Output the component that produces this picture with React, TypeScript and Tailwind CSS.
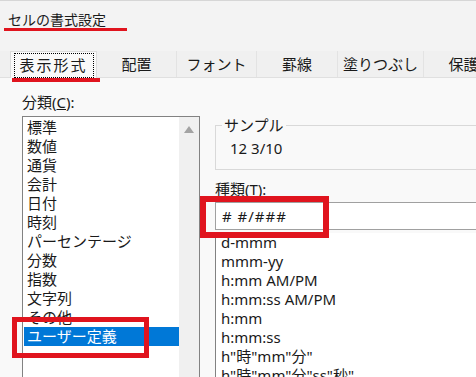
import React from 'react';

const categories = [
  '標準', '数値', '通貨', '会計', '日付', '時刻', 'パーセンテージ',
  '分数', '指数', '文字列', 'その他', 'ユーザー定義',
];

const formats = [
  'd-mmm', 'mmm-yy', 'h:mm AM/PM', 'h:mm:ss AM/PM', 'h:mm', 'h:mm:ss',
  'h"時"mm"分"', 'h"時"mm"分"ss"秒"',
];

const tabs = [
  { label: '表示形式', w: 'w-[87px]' },
  { label: '配置', w: 'w-[80px]' },
  { label: 'フォント', w: 'w-[80px]' },
  { label: '罫線', w: 'w-[81px]' },
  { label: '塗りつぶし', w: 'w-[86px]' },
  { label: '保護', w: 'w-[80px]' },
];

export default function App() {
  return (
    <div
      className="relative w-[476px] h-[377px] overflow-hidden bg-[#f9f9f9] text-[#1a1a1a] text-[15px]"
      style={{ fontFamily: '"Noto Sans", "Noto Sans CJK JP", sans-serif' }}
    >
      {/* title */}
      <div className="h-[51px] bg-[#f3f3f3] border-t border-[#d6d6d6] pl-[8px] pt-[9px] leading-[20px] text-[14px]">
        セルの書式設定
      </div>

      {/* tabs */}
      <div className="flex h-[27px] bg-[#f0f0f0] border-b border-[#e0e0e0] pl-[10px]">
        {tabs.map((t, i) => (
          <div
            key={t.label}
            className={`${t.w} shrink-0 flex items-center justify-center leading-none whitespace-nowrap ${
              i === 0 ? 'bg-[#f9f9f9] border-x border-t border-[#dcdcdc] -mb-px' : 'border-r border-[#e3e3e3]'
            }`}
          >
            {i === 0 ? (
              <span className="border border-dotted border-black w-[80px] h-[25px] flex items-center justify-center tracking-[2px]">
                {t.label}
              </span>
            ) : (
              t.label
            )}
          </div>
        ))}
      </div>

      {/* body */}
      <div className="flex pt-[16px]">
        <div className="w-[200px] shrink-0 pl-[22px]">
          <div className="h-[16px] leading-[16px]">
            分類(<span className="underline">C</span>):
          </div>
          <div className="mt-[6px] flex h-[300px] bg-white border border-[#828282]">
            <div className="flex-1 pt-[1px] pl-[1px]">
              {categories.map((c, i) => (
                <div
                  key={c}
                  className={`h-[19px] leading-[19px] pl-[3px] ${
                    i === categories.length - 1 ? 'bg-[#0078d7] text-white' : ''
                  }`}
                >
                  {c}
                </div>
              ))}
            </div>
            <div className="w-[20px] bg-[#f0f0f0] flex justify-center pt-[9px]">
              <svg width="10" height="7" viewBox="0 0 10 7">
                <path d="M5 0 L10 7 L0 7 Z" fill="#a3a3a3" />
              </svg>
            </div>
          </div>
        </div>

        <div className="flex-1 pl-[15px]">
          <div className="relative mt-[31px] h-[45px] border border-r-0 border-[#d9d9d9]">
            <span className="absolute -top-[10px] left-[6px] bg-[#f9f9f9] px-[2px] leading-[18px]">サンプル</span>
            <div className="pt-[13px] pl-[14px] leading-[18px]">12 3/10</div>
          </div>
          <div className="mt-[11px] h-[17px] leading-[17px]">
            種類(<span className="underline">T</span>):
          </div>
          <div className="mt-[4px] h-[28px] bg-white border border-r-0 border-[#a0a0a0] pl-[6px] leading-[26px] tracking-[1px]">
            # #/###
          </div>
          <div className="mt-[3px] bg-white border-l border-[#828282] pl-[5px]">
            {formats.map((f) => (
              <div key={f} className="h-[19px] leading-[19px] whitespace-nowrap">
                {f}
              </div>
            ))}
          </div>
        </div>
      </div>

      {/* red annotations */}
      <div className="absolute left-[4px] top-[28px] w-[123px] h-[3px] bg-[#e0141e]" />
      <div className="absolute left-[12px] top-[78px] w-[88px] h-[4px] bg-[#e0141e]" />
      <div className="absolute left-[12px] top-[317px] w-[137px] h-[41px] border-[5px] border-[#e0141e]" />
      <div className="absolute left-[200px] top-[196px] w-[129px] h-[42px] border-[6px] border-[#e0141e]" />
    </div>
  );
}
